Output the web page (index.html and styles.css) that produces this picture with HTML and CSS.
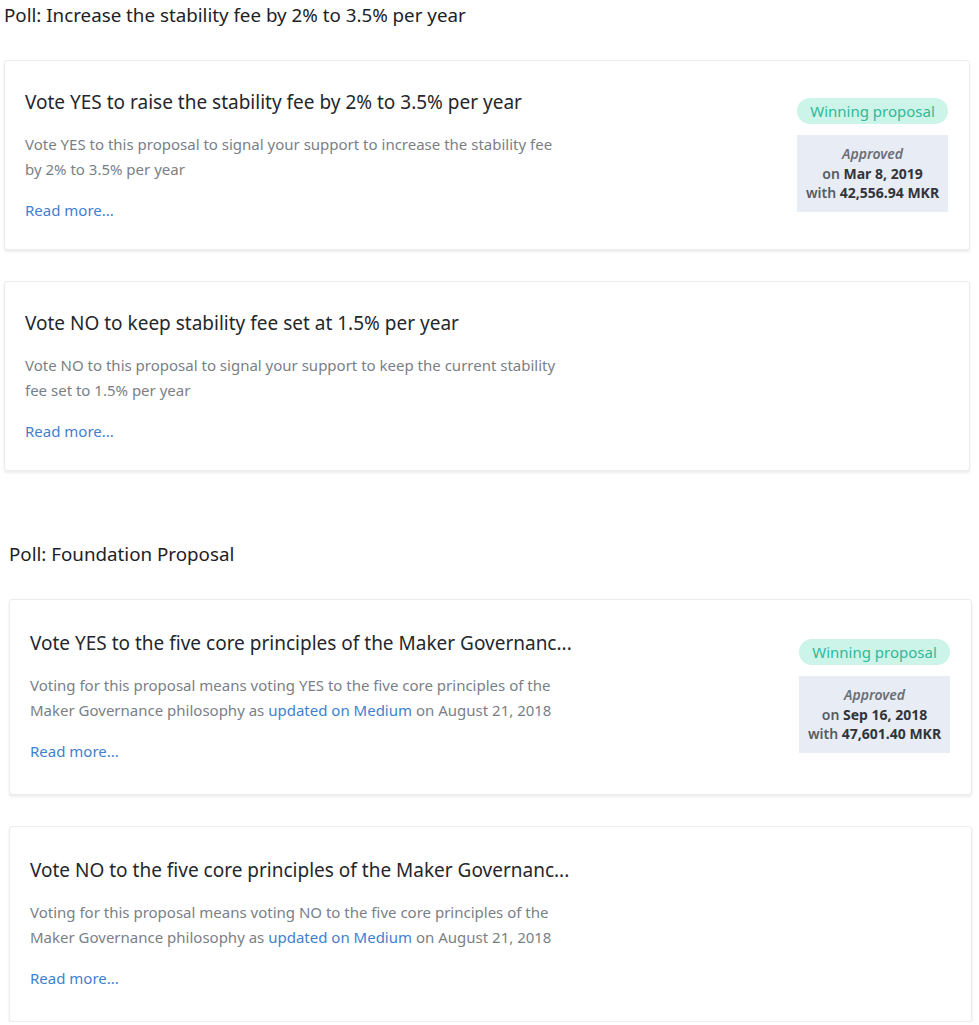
FILE: index.html
```html
<!DOCTYPE html>
<html>
<head>
<meta charset="utf-8">
<link rel="stylesheet" href="styles.css">
</head>
<body>
<section class="poll poll-first">
  <h2 class="poll-title">Poll: Increase the stability fee by 2% to 3.5% per year</h2>
  <div class="cards">
    <div class="card">
      <div class="card-body">
        <h3 class="card-title">Vote YES to raise the stability fee by 2% to 3.5% per year</h3>
        <p class="card-desc">Vote YES to this proposal to signal your support to increase the stability fee by 2% to 3.5% per year</p>
        <a class="read-more" href="#">Read more...</a>
      </div>
      <div class="card-side">
        <div class="badge">Winning proposal</div>
        <div class="approved">
          <div class="approved-label">Approved</div>
          <div>on <b>Mar 8, 2019</b></div>
          <div>with <b>42,556.94 MKR</b></div>
        </div>
      </div>
    </div>
    <div class="card">
      <div class="card-body">
        <h3 class="card-title">Vote NO to keep stability fee set at 1.5% per year</h3>
        <p class="card-desc">Vote NO to this proposal to signal your support to keep the current stability fee set to 1.5% per year</p>
        <a class="read-more" href="#">Read more...</a>
      </div>
    </div>
  </div>
</section>
<section class="poll poll-second">
  <h2 class="poll-title">Poll: Foundation Proposal</h2>
  <div class="cards">
    <div class="card card-tall">
      <div class="card-body">
        <h3 class="card-title">Vote YES to the five core principles of the Maker Governanc...</h3>
        <div class="card-desc">
          <div>Voting for this proposal means voting YES to the five core principles of the</div>
          <div><span>Maker Governance philosophy as</span> <a href="#">updated on Medium</a> <span>on August 21, 2018</span></div>
        </div>
        <a class="read-more" href="#">Read more...</a>
      </div>
      <div class="card-side">
        <div class="badge">Winning proposal</div>
        <div class="approved">
          <div class="approved-label">Approved</div>
          <div>on <b>Sep 16, 2018</b></div>
          <div>with <b>47,601.40 MKR</b></div>
        </div>
      </div>
    </div>
    <div class="card card-tall">
      <div class="card-body">
        <h3 class="card-title">Vote NO to the five core principles of the Maker Governanc...</h3>
        <div class="card-desc">
          <div>Voting for this proposal means voting NO to the five core principles of the</div>
          <div><span>Maker Governance philosophy as</span> <a href="#">updated on Medium</a> <span>on August 21, 2018</span></div>
        </div>
        <a class="read-more" href="#">Read more...</a>
      </div>
    </div>
  </div>
</section>
</body>
</html>
```
FILE: styles.css
```css
html, body {
  margin: 0;
  padding: 0;
  background: #ffffff;
}
body {
  font-family: "Noto Sans", "Open Sans", sans-serif;
  color: #25282d;
}
.poll-first {
  padding: 0 9px 0 4px;
}
.poll-second {
  padding: 0 7px 0 9px;
  margin-top: 68px;
}
.poll-title {
  margin: 0;
  font-size: 18.75px;
  font-weight: 400;
  line-height: 30px;
  color: #1e2126;
}
.cards {
  margin-top: 30px;
  display: flex;
  flex-direction: column;
  gap: 31px;
}
.card {
  display: flex;
  justify-content: space-between;
  align-items: flex-start;
  background: #fff;
  border: 1px solid #ececec;
  border-radius: 3px;
  box-shadow: 0 2px 3px rgba(0, 0, 0, 0.08);
  padding: 27px 21px 25px 20px;
  min-height: 136px;
}
.card-tall {
  padding-top: 29px;
  padding-bottom: 29px;
}
.card-body {
  width: 540px;
}
.card-title {
  margin: 0 0 16px;
  font-size: 19px;
  font-weight: 400;
  line-height: 28px;
  color: #24272c;
  white-space: nowrap;
}
.card-desc {
  margin: 0 0 16px;
  font-size: 15px;
  line-height: 25px;
  color: #7a7f87;
}
.card-desc a,
.read-more {
  color: #3f7fcf;
  text-decoration: none;
}
.read-more {
  display: block;
  font-size: 15px;
  line-height: 25px;
}
.card-side {
  width: 151px;
  margin-top: 10px;
  display: flex;
  flex-direction: column;
  gap: 11px;
}
.badge {
  height: 26px;
  line-height: 26px;
  border-radius: 13px;
  background: #cdf4e8;
  color: #2fb99a;
  font-size: 15px;
  text-align: center;
}
.approved {
  background: #e8ecf4;
  padding: 9px 2px;
  text-align: center;
  font-size: 14px;
  line-height: 19.5px;
  color: #575c64;
  font-weight: 600;
}
.approved b {
  color: #31353b;
  font-weight: 700;
}
.approved-label {
  font-style: italic;
  color: #6a6f77;
}
```
